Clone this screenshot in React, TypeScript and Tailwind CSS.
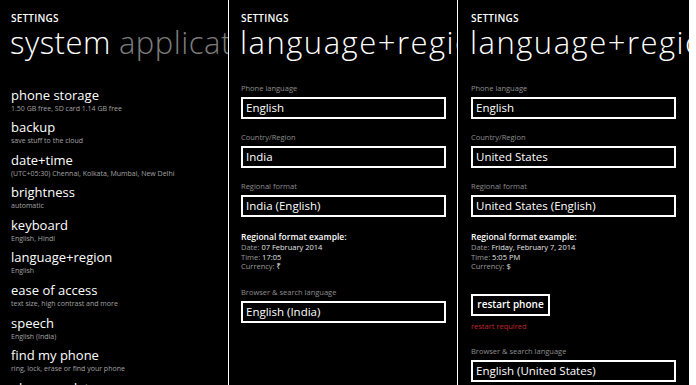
const FONT = "font-['Open_Sans','Noto_Sans','DejaVu_Sans',sans-serif]";

const SYSTEM_ITEMS = [
  { title: "phone storage", sub: "1.50 GB free, SD card 1.14 GB free" },
  { title: "backup", sub: "save stuff to the cloud" },
  { title: "date+time", sub: "(UTC+05:30) Chennai, Kolkata, Mumbai, New Delhi" },
  { title: "brightness", sub: "automatic" },
  { title: "keyboard", sub: "English, Hindi" },
  { title: "language+region", sub: "English" },
  { title: "ease of access", sub: "text size, high contrast and more" },
  { title: "speech", sub: "English (India)" },
  { title: "find my phone", sub: "ring, lock, erase or find your phone" },
  { title: "phone update", sub: "check for updates" },
];

function Settings() {
  return <div className="h-[12px] text-[10px] font-semibold leading-[12px] tracking-[0.2px] text-white">SETTINGS</div>;
}

function Field({ label, value, className = "" }: { label: string; value: string; className?: string }) {
  return (
    <div className={className}>
      <div className="text-[7.5px] leading-[10px] text-[#8e8e8e]">{label}</div>
      <div className="mt-[4px] flex h-[22px] w-[205px] items-center border-2 border-white px-[3px] text-[11.5px] text-white">
        {value}
      </div>
    </div>
  );
}

function Example({ date, time, currency }: { date: string; time: string; currency: string }) {
  const rows = [
    ["Date:", date],
    ["Time:", time],
    ["Currency:", currency],
  ];
  return (
    <div className="mt-[14px]">
      <div className="text-[8.5px] font-semibold leading-[11px] text-white">Regional format example:</div>
      <div className="mt-[1px]">
        {rows.map(([k, v]) => (
          <div key={k} className="text-[7.5px] leading-[9.5px] text-[#9a9a9a]">
            {k} <span className="text-[#e6e6e6]">{v}</span>
          </div>
        ))}
      </div>
    </div>
  );
}

function SystemPanel() {
  return (
    <div className="h-full w-[228px] shrink-0 overflow-hidden bg-black pl-[11px] pt-[12px]">
      <Settings />
      <div className="-ml-[1px] whitespace-nowrap text-[31px] font-light leading-[36px] tracking-[0.5px] text-white">
        system<span className="ml-[8px] text-[#7c7c7c]">applications</span>
      </div>
      <div className="mt-[26.5px]">
        {SYSTEM_ITEMS.map((item) => (
          <div key={item.title} className="pb-[6.6px]">
            <div className="whitespace-nowrap text-[13px] leading-[17px] text-white">{item.title}</div>
            <div className="whitespace-nowrap text-[7px] leading-[9px] text-[#a3a3a3]">{item.sub}</div>
          </div>
        ))}
      </div>
    </div>
  );
}

function RegionTitle() {
  return (
    <div className="-ml-[1px] whitespace-nowrap text-[31px] font-light leading-[36px] tracking-[1.5px] text-white">
      language+region
    </div>
  );
}

function IndiaPanel() {
  return (
    <div className="h-full w-[228px] shrink-0 overflow-hidden bg-black pl-[12px] pt-[12px]">
      <Settings />
      <RegionTitle />
      <Field className="mt-[22.5px]" label="Phone language" value="English" />
      <Field className="mt-[13px]" label="Country/Region" value="India" />
      <Field className="mt-[13.5px]" label="Regional format" value="India (English)" />
      <Example date="07 February 2014" time="17:05" currency="₹" />
      <Field className="mt-[15px]" label="Browser & search language" value="English (India)" />
    </div>
  );
}

function USPanel() {
  return (
    <div className="h-full w-[231px] shrink-0 overflow-hidden bg-black pl-[13px] pt-[12px]">
      <Settings />
      <RegionTitle />
      <Field className="mt-[22.5px]" label="Phone language" value="English" />
      <Field className="mt-[13px]" label="Country/Region" value="United States" />
      <Field className="mt-[13.5px]" label="Regional format" value="United States (English)" />
      <Example date="Friday, February 7, 2014" time="5:05 PM" currency="$" />
      <div className="mt-[22px] flex h-[22px] w-[79px] items-center justify-center border-2 border-white text-[10px] font-semibold text-white">
        restart phone
      </div>
      <div className="mt-[5.5px] text-[7.5px] leading-[10px] text-[#c0262d]">restart required</div>
      <Field className="mt-[14.5px]" label="Browser & search language" value="English (United States)" />
    </div>
  );
}

export default function App() {
  return (
    <div className={`flex h-[385px] w-[696px] gap-[1px] overflow-hidden bg-white ${FONT}`}>
      <SystemPanel />
      <IndiaPanel />
      <USPanel />
    </div>
  );
}
